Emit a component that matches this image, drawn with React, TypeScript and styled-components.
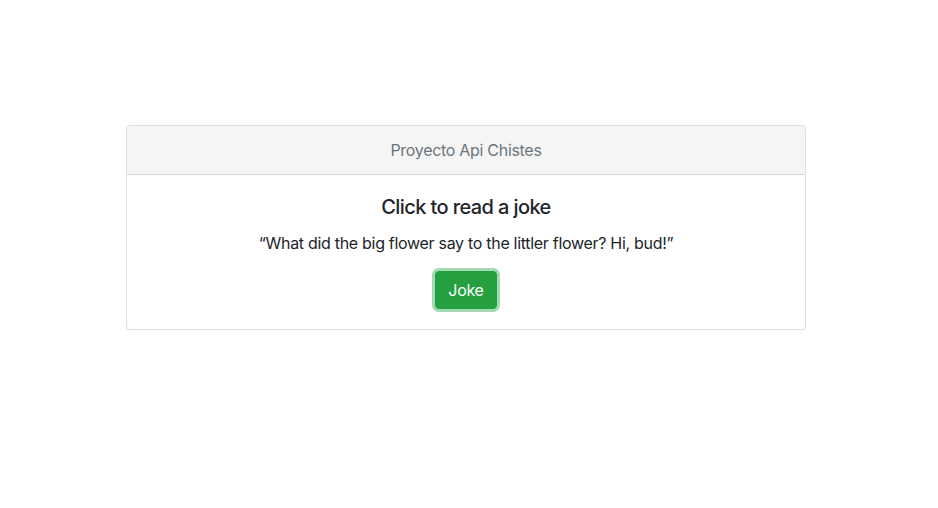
import styled, { createGlobalStyle } from "styled-components";

const GlobalStyle = createGlobalStyle`
  body {
    margin: 0;
    background: #fff;
    font-family: Inter, "Liberation Sans", sans-serif;
    color: #212529;
    letter-spacing: -0.3px;
  }
`;

export default function App() {
  return (
    <>
      <GlobalStyle />
      <Page>
        <Card>
          <CardHeader>Proyecto Api Chistes</CardHeader>
          <CardBody>
            <CardTitle>Click to read a joke</CardTitle>
            <CardText>
              “What did the big flower say to the littler flower? Hi, bud!”
            </CardText>
            <JokeButton type="button">Joke</JokeButton>
          </CardBody>
        </Card>
      </Page>
    </>
  );
}

const Page = styled.div`
  display: flex;
  justify-content: flex-start;
  padding: 125px 0 0 126px;
`;

const Card = styled.div`
  width: 680px;
  border: 1px solid rgba(0, 0, 0, 0.125);
  border-radius: 4px;
  background: #fff;
  overflow: hidden;
  box-sizing: border-box;
`;

const CardHeader = styled.div`
  padding: 12px 20px;
  line-height: 24px;
  font-size: 16px;
  text-align: center;
  color: #6c757d;
  background: #f5f5f5;
  border-bottom: 1px solid rgba(0, 0, 0, 0.125);
`;

const CardBody = styled.div`
  padding: 20px;
  display: flex;
  flex-direction: column;
  align-items: center;
  text-align: center;
`;

const CardTitle = styled.h5`
  margin: 0 0 12px;
  font-size: 20px;
  font-weight: 500;
  line-height: 24px;
  letter-spacing: -0.6px;
`;

const CardText = styled.p`
  margin: 0 0 16px;
  font-size: 16px;
  line-height: 24px;
`;

const JokeButton = styled.button`
  font-family: inherit;
  font-size: 16px;
  line-height: 24px;
  letter-spacing: inherit;
  padding: 6px 12px;
  color: #fff;
  background: #24a041;
  border: 1px solid #24a041;
  border-radius: 4px;
  box-shadow: 0 0 0 3px rgba(72, 180, 97, 0.5);
  cursor: pointer;
`;
